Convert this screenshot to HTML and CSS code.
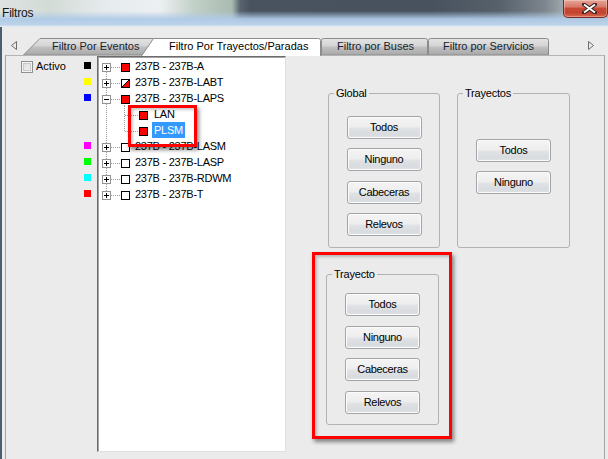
FILE: index.html
```html
<!DOCTYPE html>
<html>
<head>
<meta charset="utf-8">
<link rel="stylesheet" href="styles.css">
</head>
<body>
<svg class="defs" width="0" height="0">
  <defs>
    <linearGradient id="tg" x1="0" y1="0" x2="0" y2="1">
      <stop offset="0" stop-color="#e4e4e4"/>
      <stop offset="0.45" stop-color="#d4d4d4"/>
      <stop offset="0.52" stop-color="#c0c0c0"/>
      <stop offset="1" stop-color="#a9a9a9"/>
    </linearGradient>
  </defs>
</svg>
<div class="window">
  <div class="titlebar">
    <span class="title">Filtros</span>
    <div class="close">
      <svg width="15" height="11" viewBox="0 0 15 11">
        <path d="M2 1.5 L13 9.5 M13 1.5 L2 9.5" stroke="#3a2020" stroke-width="4" stroke-linecap="round"/>
        <path d="M2 1.5 L13 9.5 M13 1.5 L2 9.5" stroke="#ffffff" stroke-width="2"/>
      </svg>
    </div>
  </div>
  <div class="client">
    <div class="tabstrip">
      <svg class="arrow left" width="6" height="9"><polygon points="5.5,0.5 0.5,4.5 5.5,8.5" fill="none" stroke="#6b6b6b"/></svg>
      <div class="tabs">
        <div class="tab t1">
          <svg width="133" height="17"><path d="M0.5 17 L17 0.5 H133 V17 Z" fill="url(#tg)" stroke="#8c8c8c"/></svg>
          <span>Filtro Por Eventos</span>
        </div>
        <div class="tab sel">
          <svg width="180" height="18"><path d="M0.5 18 L12.5 0.5 H177.5 Q179.5 0.5 179.5 2.5 V18" fill="#ffffff" stroke="#8c8c8c"/></svg>
          <span>Filtro Por Trayectos/Paradas</span>
        </div>
        <div class="tab t3">
          <svg width="107" height="17"><path d="M0.5 17 V2.5 Q0.5 0.5 2.5 0.5 H104.5 Q106.5 0.5 106.5 2.5 V17 Z" fill="url(#tg)" stroke="#8c8c8c"/></svg>
          <span>Filtro por Buses</span>
        </div>
        <div class="tab t4">
          <svg width="121" height="17"><path d="M0.5 17 V2.5 Q0.5 0.5 2.5 0.5 H118.5 Q120.5 0.5 120.5 2.5 V17 Z" fill="url(#tg)" stroke="#8c8c8c"/></svg>
          <span>Filtro por Servicios</span>
        </div>
      </div>
      <svg class="arrow right" width="6" height="9"><polygon points="0.5,0.5 5.5,4.5 0.5,8.5" fill="none" stroke="#6b6b6b"/></svg>
    </div>
    <div class="page">
      <div class="activo">
        <span class="cbox"></span>
        <span class="alabel">Activo</span>
      </div>
      <div class="swatches">
        <div class="sw"><span style="background:#000000"></span></div>
        <div class="sw"><span style="background:#ffff00"></span></div>
        <div class="sw"><span style="background:#0000ff"></span></div>
        <div class="sw"></div>
        <div class="sw"></div>
        <div class="sw"><span style="background:#ff00ff"></span></div>
        <div class="sw"><span style="background:#00ff00"></span></div>
        <div class="sw"><span style="background:#00ffff"></span></div>
        <div class="sw"><span style="background:#ff0000"></span></div>
      </div>
      <div class="tree">
        <div class="row">
          <svg class="g" width="36" height="16"><line class="dot" x1="7.5" y1="10" x2="7.5" y2="16"/><line class="dot" x1="12" y1="9.5" x2="22" y2="9.5"/><rect class="exp" x="3.5" y="5.5" width="8" height="8"/><path class="pm" d="M5 9.5h5M7.5 7v5"/><rect class="chk on" x="22.5" y="5.5" width="8" height="8"/></svg><span class="lbl">237B - 237B-A</span>
        </div>
        <div class="row">
          <svg class="g" width="36" height="16"><line class="dot" x1="7.5" y1="0" x2="7.5" y2="16"/><line class="dot" x1="12" y1="9.5" x2="22" y2="9.5"/><rect class="exp" x="3.5" y="5.5" width="8" height="8"/><path class="pm" d="M5 9.5h5M7.5 7v5"/><rect class="chk" x="22.5" y="5.5" width="8" height="8"/><polygon points="30,6 30,13 23,13" fill="#ff0000"/><line x1="23" y1="13" x2="30" y2="6" stroke="#000"/></svg><span class="lbl">237B - 237B-LABT</span>
        </div>
        <div class="row">
          <svg class="g" width="36" height="16"><line class="dot" x1="7.5" y1="0" x2="7.5" y2="16"/><line class="dot" x1="12" y1="9.5" x2="22" y2="9.5"/><line class="dot" x1="25.5" y1="15" x2="25.5" y2="16"/><rect class="exp" x="3.5" y="5.5" width="8" height="8"/><path class="pm" d="M5 9.5h5"/><rect class="chk on" x="22.5" y="5.5" width="8" height="8"/></svg><span class="lbl">237B - 237B-LAPS</span>
        </div>
        <div class="row">
          <svg class="g" width="53" height="16"><line class="dot" x1="7.5" y1="0" x2="7.5" y2="16"/><line class="dot" x1="25.5" y1="0" x2="25.5" y2="16"/><line class="dot" x1="26" y1="9.5" x2="40" y2="9.5"/><rect class="chk on" x="40.5" y="5.5" width="8" height="8"/></svg><span class="lbl child">LAN</span>
        </div>
        <div class="row">
          <svg class="g" width="53" height="16"><line class="dot" x1="7.5" y1="0" x2="7.5" y2="16"/><line class="dot" x1="25.5" y1="0" x2="25.5" y2="10"/><line class="dot" x1="26" y1="9.5" x2="40" y2="9.5"/><rect class="chk on" x="40.5" y="5.5" width="8" height="8"/></svg><span class="lbl child hl">PLSM</span>
        </div>
        <div class="row">
          <svg class="g" width="36" height="16"><line class="dot" x1="7.5" y1="0" x2="7.5" y2="16"/><line class="dot" x1="12" y1="9.5" x2="22" y2="9.5"/><rect class="exp" x="3.5" y="5.5" width="8" height="8"/><path class="pm" d="M5 9.5h5M7.5 7v5"/><rect class="chk" x="22.5" y="5.5" width="8" height="8"/></svg><span class="lbl">237B - 237B-LASM</span>
        </div>
        <div class="row">
          <svg class="g" width="36" height="16"><line class="dot" x1="7.5" y1="0" x2="7.5" y2="16"/><line class="dot" x1="12" y1="9.5" x2="22" y2="9.5"/><rect class="exp" x="3.5" y="5.5" width="8" height="8"/><path class="pm" d="M5 9.5h5M7.5 7v5"/><rect class="chk" x="22.5" y="5.5" width="8" height="8"/></svg><span class="lbl">237B - 237B-LASP</span>
        </div>
        <div class="row">
          <svg class="g" width="36" height="16"><line class="dot" x1="7.5" y1="0" x2="7.5" y2="16"/><line class="dot" x1="12" y1="9.5" x2="22" y2="9.5"/><rect class="exp" x="3.5" y="5.5" width="8" height="8"/><path class="pm" d="M5 9.5h5M7.5 7v5"/><rect class="chk" x="22.5" y="5.5" width="8" height="8"/></svg><span class="lbl">237B - 237B-RDWM</span>
        </div>
        <div class="row">
          <svg class="g" width="36" height="16"><line class="dot" x1="7.5" y1="0" x2="7.5" y2="9"/><line class="dot" x1="12" y1="9.5" x2="22" y2="9.5"/><rect class="exp" x="3.5" y="5.5" width="8" height="8"/><path class="pm" d="M5 9.5h5M7.5 7v5"/><rect class="chk" x="22.5" y="5.5" width="8" height="8"/></svg><span class="lbl">237B - 237B-T</span>
        </div>
        <div class="annot small"></div>
      </div>
      <div class="panel">
        <div class="toprow">
          <div class="group global">
            <div class="gtitle">Global</div>
            <button class="btn first">Todos</button>
            <button class="btn">Ninguno</button>
            <button class="btn">Cabeceras</button>
            <button class="btn">Relevos</button>
          </div>
          <div class="group trayectos">
            <div class="gtitle">Trayectos</div>
            <button class="btn first">Todos</button>
            <button class="btn">Ninguno</button>
          </div>
        </div>
        <div class="annot big">
          <div class="group trayecto">
            <div class="gtitle">Trayecto</div>
            <button class="btn first">Todos</button>
            <button class="btn">Ninguno</button>
            <button class="btn">Cabeceras</button>
            <button class="btn">Relevos</button>
          </div>
        </div>
      </div>
    </div>
  </div>
</div>
</body>
</html>
```

FILE: styles.css
```css
html, body {
  margin: 0;
  padding: 0;
}
body {
  width: 608px;
  height: 459px;
  overflow: hidden;
  background: #ebebeb;
  font-family: "Liberation Sans", Arial, sans-serif;
  font-size: 11px;
  color: #000;
}
.defs {
  position: absolute;
  width: 0;
  height: 0;
}
.window {
  height: 459px;
  display: flex;
  flex-direction: column;
}

/* Title bar */
.titlebar {
  height: 27px;
  flex-shrink: 0;
  display: flex;
  align-items: flex-start;
  background:
    linear-gradient(to bottom, rgba(176,203,231,0) 0px, rgba(176,203,231,0) 11px, rgba(176,203,231,0.95) 19px, #bcd3ea 25px, #dae6f2 26px, #e4ecf3 27px),
    linear-gradient(to right, #dfe3e2 0px, #d2dbd6 50px, #e6ebed 105px, #edf0f2 160px, #c1cfc7 195px, #a9bbb1 232px, #5a6470 240px, #48535f 250px, #47525e 430px, #56616c 500px, #7d868e 545px, #a0a7ac 563px);
}
.title {
  font-size: 12px;
  letter-spacing: -0.2px;
  line-height: 15px;
  padding: 6px 0 0 2px;
  color: #141414;
}
.close {
  margin-left: auto;
  width: 45px;
  height: 18px;
  box-sizing: border-box;
  border: 1px solid #7a2a20;
  border-top: none;
  border-radius: 0 0 5px 5px;
  background: linear-gradient(to bottom, #e7a597 0%, #d9786a 40%, #c74a36 50%, #c4432f 75%, #d86a4e 100%);
  box-shadow: inset 0 0 0 1px rgba(255,255,255,0.3);
  padding: 3px 0 0 18px;
}
.close svg {
  display: block;
}

/* Client area */
.client {
  flex: 1;
  display: flex;
  flex-direction: column;
  border-left: 2px solid #4c5d6f;
  padding: 0 3px 0 3px;
}
.tabstrip {
  height: 28px;
  flex-shrink: 0;
  display: flex;
  align-items: flex-end;
}
.arrow {
  flex-shrink: 0;
  margin-bottom: 5px;
}
.arrow.left {
  margin-left: 6px;
}
.arrow.right {
  margin-left: auto;
  margin-right: 11px;
}
.tabs {
  display: flex;
  align-items: flex-end;
  margin-left: 6px;
}
.tab {
  position: relative;
  flex-shrink: 0;
  height: 17px;
  line-height: 17px;
  box-sizing: border-box;
  font-size: 11px;
  color: #18222e;
  white-space: nowrap;
}
.tab svg {
  position: absolute;
  left: 0;
  top: 0;
}
.tab span {
  position: relative;
}
.t1 {
  width: 133px;
  padding-left: 29px;
}
.sel {
  width: 180px;
  height: 18px;
  margin-left: -15px;
  margin-bottom: -1px;
  padding-left: 28px;
  z-index: 2;
  color: #000;
}
.t3 {
  width: 107px;
  padding-left: 16px;
}
.t4 {
  width: 121px;
  padding-left: 15px;
}

/* Tab page */
.page {
  flex: 1;
  display: flex;
  align-items: flex-start;
  border: 1px solid #a4a4a4;
  border-top-color: #b4b4b4;
  border-bottom: none;
  background: #ebebeb;
}
.activo {
  width: 78px;
  flex-shrink: 0;
  box-sizing: border-box;
  padding: 4px 0 0 15px;
  display: flex;
  align-items: center;
  gap: 3px;
}
.cbox {
  width: 12px;
  height: 12px;
  box-sizing: border-box;
  border: 1px solid #8e8f8f;
  background: linear-gradient(135deg, #d9d9d9, #f7f7f7);
  box-shadow: inset 0 0 0 1px #f4f4f4, inset 0 0 0 2px #c9c9c9;
}
.alabel {
  line-height: 13px;
}
.swatches {
  width: 13px;
  flex-shrink: 0;
  padding-top: 2px;
}
.sw {
  height: 16px;
  box-sizing: border-box;
  padding-top: 4px;
}
.sw span {
  display: block;
  width: 7px;
  height: 7px;
}

/* Tree */
.tree {
  position: relative;
  flex-shrink: 0;
  width: 189px;
  height: 396px;
  box-sizing: border-box;
  border: 1px solid;
  border-color: #6c6c6c #e0e0e0 #e0e0e0 #6c6c6c;
  padding: 1px 0 0 1px;
  box-shadow: inset 1px 1px 0 #a3a3a3;
  background: #fff;
}
.row {
  display: flex;
  height: 16px;
  align-items: flex-start;
}
.g {
  flex-shrink: 0;
  display: block;
}
.dot {
  stroke: #9a9a9a;
  stroke-width: 1;
  stroke-dasharray: 1 1;
}
.exp {
  fill: #fff;
  stroke: #939393;
}
.pm {
  stroke: #000;
  fill: none;
}
.chk {
  fill: #fff;
  stroke: #000;
}
.chk.on {
  fill: #ff0000;
}
.lbl {
  line-height: 16px;
  letter-spacing: -0.25px;
  white-space: nowrap;
}
.lbl.child {
  padding: 0 2px;
}
.lbl.hl {
  background: #3399ff;
  color: #fff;
}

/* Annotations */
.annot {
  border: 3px solid #ff0000;
  box-sizing: border-box;
  box-shadow: 2px 3px 4px rgba(0,0,0,0.45), inset 2px 2px 3px rgba(0,0,0,0.22);
}
.annot.small {
  position: absolute;
  left: 30px;
  top: 48px;
  width: 69px;
  height: 42px;
}
.annot.big {
  width: 140px;
  margin-top: 4px;
  padding: 19px 0 11px 11px;
}

/* Right panel */
.panel {
  display: flex;
  flex-direction: column;
  margin-left: 26px;
  margin-top: 37px;
}
.toprow {
  display: flex;
  gap: 17px;
  padding-left: 16px;
}
.group {
  box-sizing: border-box;
  border: 1px solid #b2b2b2;
  border-radius: 3px;
  display: flex;
  flex-direction: column;
  align-items: center;
}
.gtitle {
  align-self: flex-start;
  margin: -7px 0 0 5px;
  padding: 0 2px;
  line-height: 13px;
  background: #ebebeb;
  letter-spacing: -0.2px;
}
.global {
  width: 112px;
  height: 155px;
}
.trayectos {
  width: 113px;
  height: 155px;
}
.trayecto {
  width: 113px;
  height: 151px;
}
.btn {
  width: 75px;
  height: 23px;
  box-sizing: border-box;
  margin: 9.4px 0 0 0;
  padding: 0;
  border: 1px solid #a2a4a7;
  border-radius: 3px;
  background: linear-gradient(to bottom, #f4f4f4 0%, #eeeeee 45%, #e0e2e5 55%, #d8dbdf 85%, #e2e4e7 100%);
  box-shadow: inset 0 0 0 1px #fbfbfb;
  font-family: "Liberation Sans", Arial, sans-serif;
  font-size: 11px;
  letter-spacing: -0.3px;
  line-height: 21px;
  color: #000;
  text-align: center;
}
.global .btn.first {
  margin-top: 16px;
}
.trayectos .btn.first {
  margin-top: 39px;
}
.trayectos .btn {
  margin-top: 9px;
}
.trayecto .btn {
  margin-top: 9.7px;
}
.trayecto .btn.first {
  margin-top: 12px;
}
```
